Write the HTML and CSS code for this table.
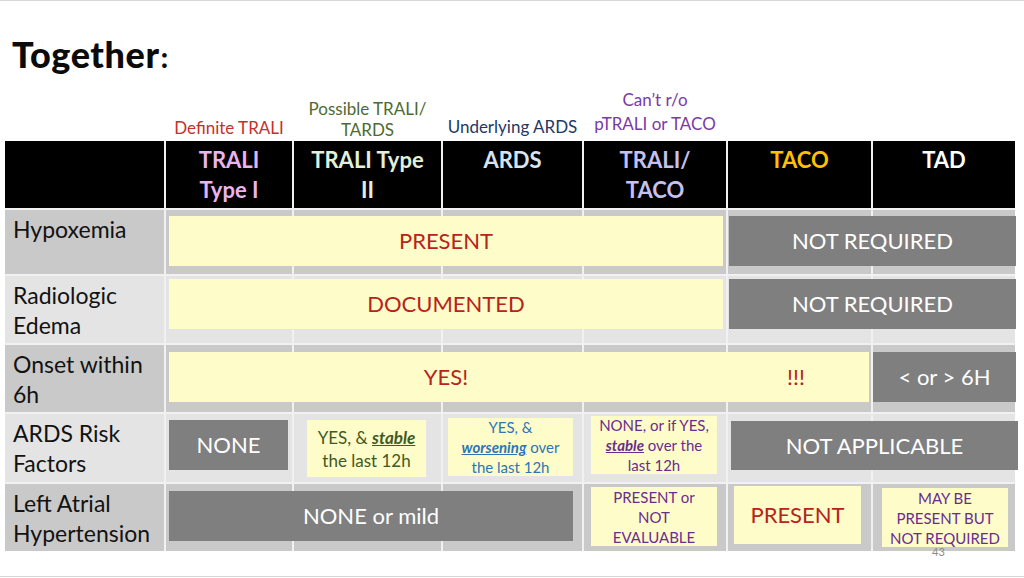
FILE: index.html
```html
<!DOCTYPE html>
<html lang="en">
<head>
<meta charset="utf-8">
<title>Together</title>
<link rel="stylesheet" href="styles.css">
</head>
<body>
<div class="slide">
  <h1 class="title">Together<span class="colon">:</span></h1>

  <div class="captions">
    <div class="cap cap-def">Definite TRALI</div>
    <div class="cap cap-poss">Possible TRALI/<br>TARDS</div>
    <div class="cap cap-und">Underlying ARDS</div>
    <div class="cap cap-cant">Can’t r/o<br>pTRALI or TACO</div>
  </div>

  <div class="table">
    <div class="row head">
      <div class="c"></div>
      <div class="c"><span class="h h-t1">TRALI<br>Type I</span></div>
      <div class="c"><span class="h h-t2">TRALI Type<br>II</span></div>
      <div class="c"><span class="h h-ards">ARDS</span></div>
      <div class="c"><span class="h h-tt">TRALI/<br>TACO</span></div>
      <div class="c"><span class="h h-taco">TACO</span></div>
      <div class="c"><span class="h h-tad">TAD</span></div>
    </div>

    <div class="row dark r1">
      <div class="c label">Hypoxemia</div>
      <div class="c"></div><div class="c"></div><div class="c"></div>
      <div class="c"></div><div class="c"></div><div class="c"></div>
      <div class="box yel big red b-r1-yes"><span class="txt">PRESENT</span></div>
      <div class="box gry big b-r1-no"><span class="txt">NOT REQUIRED</span></div>
    </div>

    <div class="row light r2">
      <div class="c label">Radiologic<br>Edema</div>
      <div class="c"></div><div class="c"></div><div class="c"></div>
      <div class="c"></div><div class="c"></div><div class="c"></div>
      <div class="box yel big red b-r2-yes"><span class="txt">DOCUMENTED</span></div>
      <div class="box gry big b-r2-no"><span class="txt">NOT REQUIRED</span></div>
    </div>

    <div class="row dark r3">
      <div class="c label">Onset within<br>6h</div>
      <div class="c"></div><div class="c"></div><div class="c"></div>
      <div class="c"></div><div class="c"></div><div class="c"></div>
      <div class="box yel big red b-r3-yes"><span class="yes-main">YES!</span><span class="yes-alt">!!!</span></div>
      <div class="box gry big b-r3-no"><span class="txt">&lt; or &gt; 6H</span></div>
    </div>

    <div class="row light r4">
      <div class="c label">ARDS Risk<br>Factors</div>
      <div class="c"></div><div class="c"></div><div class="c"></div>
      <div class="c"></div><div class="c"></div><div class="c"></div>
      <div class="box gry big b-r4-none"><span class="txt">NONE</span></div>
      <div class="box yel small green b-r4-stable"><span class="txt">YES, &amp; <b class="em">stable</b><br>the last 12h</span></div>
      <div class="box yel small blue b-r4-worse"><span class="txt">YES, &amp;<br><b class="em">worsening</b> over<br>the last 12h</span></div>
      <div class="box yel small purple b-r4-nor"><span class="txt">NONE, or if YES,<br><b class="em">stable</b> over the<br>last 12h</span></div>
      <div class="box gry big b-r4-na"><span class="txt">NOT APPLICABLE</span></div>
    </div>

    <div class="row dark r5">
      <div class="c label">Left Atrial<br>Hypertension</div>
      <div class="c"></div><div class="c"></div><div class="c"></div>
      <div class="c"></div><div class="c"></div><div class="c"></div>
      <div class="box gry big b-r5-mild"><span class="txt">NONE or mild</span></div>
      <div class="box yel small purple b-r5-eval"><span class="txt">PRESENT or<br>NOT<br>EVALUABLE</span></div>
      <div class="box yel big red b-r5-pres"><span class="txt">PRESENT</span></div>
      <div class="box yel small purple b-r5-may"><span class="txt">MAY BE<br>PRESENT BUT<br>NOT REQUIRED</span></div>
    </div>
  </div>

  <div class="page-num">43</div>
</div>
</body>
</html>
```

FILE: styles.css
```css
html, body {
  margin: 0;
  padding: 0;
  background: #ffffff;
}

body {
  font-family: "Lato", "Open Sans", "Liberation Sans", sans-serif;
  color: #111111;
}

.slide {
  position: relative;
  width: 1024px;
  height: 577px;
  box-sizing: border-box;
  border-top: 1px solid #d6d6d6;
  border-bottom: 1px solid #d6d6d6;
  overflow: hidden;
}

.title {
  margin: 0;
  padding: 35px 0 0 12px;
  height: 36px;
  font-size: 36px;
  line-height: 36px;
  font-weight: 900;
  letter-spacing: 0.6px;
  color: #0b0b0b;
}

.colon {
  font-size: 28px;
  margin-left: 1px;
}

/* column template shared by captions and rows */
.captions,
.row {
  display: grid;
  grid-template-columns: 159px 126px 147px 139px 142px 143px 142px;
  column-gap: 2px;
}

.captions {
  margin-left: 5px;
  height: 69px;
  align-items: end;
}

.cap {
  text-align: center;
  font-size: 17px;
  white-space: nowrap;
}

.cap-def {
  grid-column: 2;
  line-height: 20px;
  margin-bottom: 3px;
  color: #c4302b;
}

.cap-poss {
  grid-column: 3;
  line-height: 21px;
  margin-bottom: 1px;
  color: #4e6b30;
}

.cap-und {
  grid-column: 4;
  line-height: 20px;
  margin-bottom: 4px;
  color: #1f3864;
}

.cap-cant {
  grid-column: 5;
  line-height: 24px;
  margin-bottom: 5px;
  color: #7a3aa6;
}

.table {
  margin-left: 5px;
  width: 1010px;
  display: flex;
  flex-direction: column;
  row-gap: 2px;
  background: #f1f1f1;
}

.row {
  background: #f1f1f1;
  height: 67px;
}

.row.r1 { height: 64px; }
.row.r4 { height: 68px; }

.c {
  grid-row: 1;
}

.c:nth-child(1) { grid-column: 1; }
.c:nth-child(2) { grid-column: 2; }
.c:nth-child(3) { grid-column: 3; }
.c:nth-child(4) { grid-column: 4; }
.c:nth-child(5) { grid-column: 5; }
.c:nth-child(6) { grid-column: 6; }
.c:nth-child(7) { grid-column: 7; }

.head .c {
  background: #000000;
  text-align: center;
  padding-top: 4px;
  box-sizing: border-box;
}

.h {
  display: block;
  font-weight: 700;
  font-size: 22px;
  line-height: 30px;
}

.h-t1 { color: #eab4ef; }
.h-t2 { color: #e2efda; }
.h-ards { color: #dae3f3; }
.h-tt { color: #c6c1ee; }
.h-taco { color: #ffc000; }
.h-tad { color: #ffffff; }

.dark .c { background: #c9c9c9; }
.light .c { background: #e4e4e4; }

.label {
  padding: 4px 0 0 8px;
  box-sizing: border-box;
  font-size: 23px;
  line-height: 30px;
  color: #121212;
}

/* overlay boxes inside the grid rows */
.box {
  grid-row: 1;
  align-self: start;
  display: flex;
  align-items: center;
  justify-content: center;
  text-align: center;
  box-sizing: border-box;
  height: 50px;
}

.txt {
  display: block;
  white-space: nowrap;
}

.yel { background: #fefcc9; }
.gry { background: #7f7f7f; color: #ffffff; }

.big {
  font-size: 22px;
  line-height: 26px;
}

.small {
  font-size: 15px;
  line-height: 20px;
}

.b-r4-stable .txt { font-size: 17px; line-height: 23px; }

.red { color: #b8231b; }
.green { color: #3f5a24; }
.blue { color: #2e75b6; }
.purple { color: #6b2c8f; }

.em {
  font-style: italic;
  font-weight: 700;
  text-decoration: underline;
}

/* row 1 */
.b-r1-yes { grid-column: 2 / 6; margin: 6px 3px 0 3px; }
.b-r1-no  { grid-column: 6 / 8; margin: 6px -1px 0 1px; }

/* row 2 */
.b-r2-yes { grid-column: 2 / 6; margin: 3px 3px 0 3px; }
.b-r2-no  { grid-column: 6 / 8; margin: 3px -1px 0 1px; }

/* row 3 */
.b-r3-yes {
  grid-column: 2 / 7;
  margin: 7px 2px 0 3px;
  justify-content: flex-start;
}
.yes-main { flex: 0 0 554px; text-align: center; }
.yes-alt { flex: 1 1 auto; text-align: center; }
.b-r3-no  { grid-column: 7 / 8; margin: 7px -1px 0 0; }

/* row 4 */
.b-r4-none   { grid-column: 2; margin: 6px 4px 0 3px; }
.b-r4-stable { grid-column: 3; margin: 6px 15px 0 13px; height: 57px; }
.b-r4-worse  { grid-column: 4; margin: 4px 9px 0 5px; height: 58px; }
.b-r4-nor    { grid-column: 5; margin: 2px 9px 0 7px; height: 58px; }
.b-r4-na     { grid-column: 6 / 8; margin: 7px -3px 0 3px; height: 49px; }

/* row 5 */
.b-r5-mild { grid-column: 2 / 5; margin: 7px 9px 0 3px; }
.b-r5-eval { grid-column: 5; margin: 3px 9px 0 7px; height: 59px; }
.b-r5-pres { grid-column: 6; margin: 2px 10px 0 6px; height: 58px; }
.b-r5-may  { grid-column: 7; margin: 4px 7px 0 9px; height: 59px; }

.page-num {
  position: absolute;
  left: 932px;
  top: 545px;
  font-size: 11px;
  line-height: 12px;
  color: #8a8a8a;
}
```
